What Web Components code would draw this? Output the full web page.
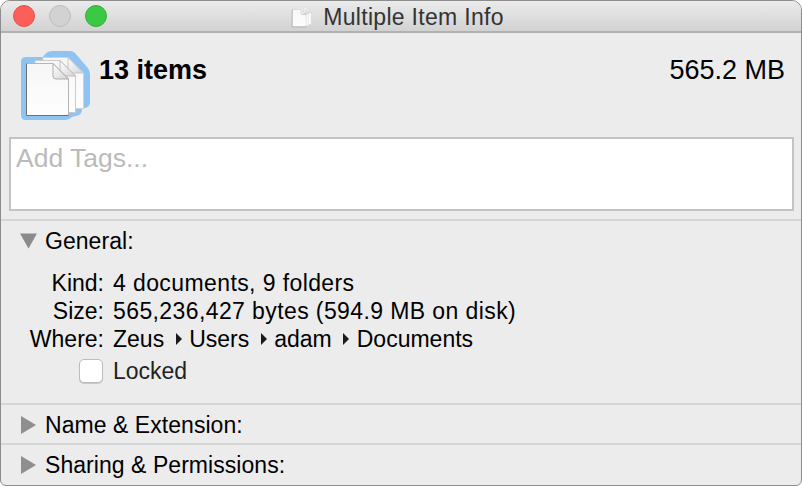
<!DOCTYPE html>
<html>
<head>
<meta charset="utf-8">
<title>Multiple Item Info</title>
<style>
  html, body { margin: 0; padding: 0; background: #fff; }
  body { width: 802px; height: 486px; overflow: hidden; font: 23px "Liberation Sans", Arial, sans-serif; color: #000; }
</style>
</head>
<body>
<info-window>
  <title-bar slot="title">Multiple Item Info</title-bar>
  <info-header name="13 items" size="565.2 MB"></info-header>
  <tag-field placeholder="Add Tags..."></tag-field>
  <disclosure-section label="General:" open style="--section-height:184px">
    <info-row label="Kind:">4 documents, 9 folders</info-row>
    <info-row label="Size:">565,236,427 bytes (594.9 MB on disk)</info-row>
    <info-row label="Where:" plain><path-crumbs items="Zeus|Users|adam|Documents"></path-crumbs></info-row>
    <check-row>Locked</check-row>
  </disclosure-section>
  <disclosure-section label="Name &amp; Extension:" style="--section-height:40px"></disclosure-section>
  <disclosure-section label="Sharing &amp; Permissions:" style="--section-height:42px"></disclosure-section>
</info-window>

<script>
// doc stack, used big in the header (with the blue selection halo) and small in the title bar
const stackIcon = (id) => `
  <svg viewBox="0 0 72 72" width="100%" height="100%" aria-hidden="true">
    <defs>
      <linearGradient id="${id}" x1="0" y1="0" x2="0" y2="1">
        <stop offset="0" stop-color="#f6f6f6"/><stop offset="1" stop-color="#fefefe"/>
      </linearGradient>
      <linearGradient id="${id}f" x1="0" y1="0" x2="1" y2="1">
        <stop offset="0" stop-color="#ffffff"/><stop offset="1" stop-color="#d4d4d4"/>
      </linearGradient>
    </defs>
    <path class="halo" d="M6 7H23Q26 1 32 1H50Q53 1 55 3L67 17Q70 20 70 24V52Q70 57 65 58L62 59Q62 65 56 66L52 67Q49 70 44 70H6Q1 70 1 65V12Q1 7 6 7Z" fill="#8fc3f1"/>
    <path d="M23 7.5H48L63.5 23V58.5H23Z" fill="url(#${id})" stroke="#d2d2d2"/>
    <path d="M48 7.5V20Q48 23 51 23H63.5Z" fill="url(#${id}f)" stroke="#c4c4c4"/>
    <path d="M15 10.5H40L55.5 26V62.5H15Z" fill="url(#${id})" stroke="#cbcbcb"/>
    <path d="M40 10.5V23Q40 26 43 26H55.5Z" fill="url(#${id}f)" stroke="#bcbcbc"/>
    <path d="M6.5 13.5H33L48.5 29V65.5H6.5Z" fill="url(#${id})" stroke="#b5b5b5"/>
    <path d="M6.5 13.5V65.5H48.5" fill="none" stroke="#6e6e6e"/>
    <path d="M33 13.5V26Q33 29 36 29H48.5Z" fill="url(#${id}f)" stroke="#adadad"/>
  </svg>`;

customElements.define("title-bar", class extends HTMLElement {
  constructor() {
    super();
    this.attachShadow({ mode: "open" }).innerHTML = `
      <style>
        :host {
          display: flex; align-items: center; box-sizing: border-box; height: 32px;
          padding-left: 12px; flex: none;
          background: linear-gradient(#ebebeb, #d2d2d2);
          border-bottom: 2px solid #b1b1b1;
        }
        .light { width: 22px; height: 22px; border-radius: 50%; box-sizing: border-box; margin-right: 14px; flex: none; }
        .close { background: #fc5f5a; border: 1px solid #e5504b; }
        .min { background: #d2d2d2; border: 1px solid #bcbcbc; }
        .zoom { background: #3bc845; border: 1px solid #2fb03b; }
        .middle { position: absolute; left: 0; right: 0; top: 0; height: 32px; display: flex; justify-content: center; align-items: center; gap: 9px; padding-right: 6px; }
        .doc { width: 24px; height: 24px; margin-left: -2px; }
        .doc .halo { display: none; }
        .label { font-size: 23px; color: #333; letter-spacing: .3px; }
      </style>
      <span class="light close"></span><span class="light min"></span><span class="light zoom"></span>
      <div class="middle"><span class="doc">${stackIcon("sheetSmall")}</span><span class="label"><slot></slot></span></div>`;
  }
});

customElements.define("info-header", class extends HTMLElement {
  constructor() {
    super();
    this.attachShadow({ mode: "open" }).innerHTML = `
      <style>
        :host { display: flex; box-sizing: border-box; height: 104px; padding: 17px 16px 0 19px; flex: none; }
        .icon { width: 72px; height: 72px; margin-right: 7px; flex: none; }
        .name, .size { font-size: 27px; line-height: 28px; margin-top: 6px; }
        .name { font-weight: bold; flex: 1; }
      </style>
      <span class="icon">${stackIcon("sheet")}</span>
      <span class="name"></span><span class="size"></span>`;
    this.shadowRoot.querySelector(".name").textContent = this.getAttribute("name");
    this.shadowRoot.querySelector(".size").textContent = this.getAttribute("size");
  }
});

customElements.define("tag-field", class extends HTMLElement {
  constructor() {
    super();
    this.attachShadow({ mode: "open" }).innerHTML = `
      <style>
        :host { display: block; box-sizing: border-box; height: 74px; margin: 0 7px 8px 8px; flex: none;
          background: #fff; border: 2px solid #c3c3c3; padding: 5px 0 0 5px;
          font-size: 26.5px; line-height: 28px; color: #bbb; }
      </style><span></span>`;
    this.shadowRoot.querySelector("span").textContent = this.getAttribute("placeholder");
  }
});

customElements.define("disclosure-section", class extends HTMLElement {
  constructor() {
    super();
    const open = this.hasAttribute("open");
    this.attachShadow({ mode: "open" }).innerHTML = `
      <style>
        :host { display: block; box-sizing: border-box; height: var(--section-height); flex: none; border-top: 2px solid #d6d6d6; }
        .head { display: flex; align-items: center; height: 40px; padding-left: 18px; letter-spacing: .05px; }
        svg { width: 18px; height: 18px; margin-right: 8px; flex: none; }
        .body { padding-top: 8px; }
      </style>
      <div class="head">
        <svg viewBox="0 0 18 18">${open
          ? '<path d="M1 1.5H18L9.5 16.5Z" fill="#8b8b8b"/>'
          : '<path d="M2 0V18L17 9Z" fill="#8f8f8f"/>'}</svg>
        <span class="label"></span>
      </div>
      <div class="body"><slot></slot></div>`;
    this.shadowRoot.querySelector(".label").textContent = this.getAttribute("label");
  }
});

customElements.define("info-row", class extends HTMLElement {
  constructor() {
    super();
    this.attachShadow({ mode: "open" }).innerHTML = `
      <style>
        :host { display: grid; grid-template-columns: 103px 1fr; column-gap: 9px; height: 28px; line-height: 28px; }
        .k { text-align: right; }
        .v { letter-spacing: .4px; }
        :host([plain]) .v { letter-spacing: 0; }
      </style>
      <span class="k"></span><span class="v"><slot></slot></span>`;
    this.shadowRoot.querySelector(".k").textContent = this.getAttribute("label");
  }
});

customElements.define("path-crumbs", class extends HTMLElement {
  constructor() {
    super();
    this.attachShadow({ mode: "open" }).innerHTML = `
      <style>
        :host { display: inline-flex; align-items: center; gap: 7.5px; }
        svg { width: 6px; height: 12px; margin-left: 4px; flex: none; }
      </style>`;
    const parts = this.getAttribute("items").split("|");
    parts.forEach((p, i) => {
      const s = document.createElement("span");
      s.textContent = p;
      this.shadowRoot.append(s);
      if (i < parts.length - 1) {
        const t = document.createElement("template");
        t.innerHTML = '<svg viewBox="0 0 6 12"><path d="M0 0V12L6 6Z" fill="#1a1a1a"/></svg>';
        this.shadowRoot.append(t.content);
      }
    });
  }
});

customElements.define("check-row", class extends HTMLElement {
  constructor() {
    super();
    this.attachShadow({ mode: "open" }).innerHTML = `
      <style>
        :host { display: flex; align-items: center; gap: 10px; padding-left: 78px; margin-top: 4px; height: 28px; color: #222; }
        .box { width: 24px; height: 24px; box-sizing: border-box; background: #fff; border: 1px solid #bcbcbc; border-radius: 5px; box-shadow: 0 1px 0 #c8c8c8; }
      </style>
      <span class="box"></span><slot></slot>`;
  }
});

customElements.define("info-window", class extends HTMLElement {
  constructor() {
    super();
    this.attachShadow({ mode: "open" }).innerHTML = `
      <style>
        :host { display: flex; flex-direction: column; position: relative; box-sizing: border-box; width: 802px; height: 486px;
          background: #ececec; border: 1px solid #8d8d8d; border-radius: 10px 10px 6px 6px; overflow: hidden; }
      </style>
      <slot name="title"></slot>
      <slot></slot>`;
  }
});
</script>
</body>
</html>
